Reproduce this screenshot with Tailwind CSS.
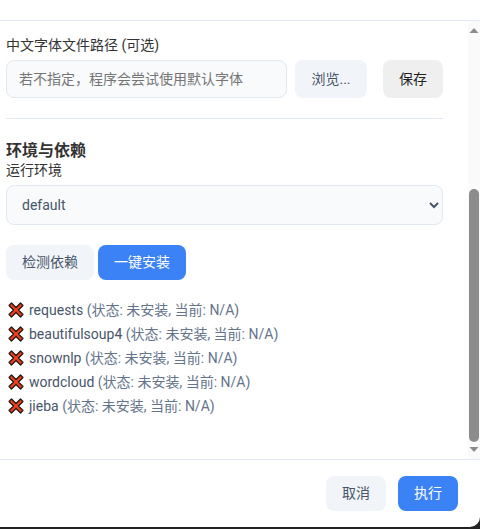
<!DOCTYPE html>
<html lang="zh-CN">
<head>
    <meta charset="UTF-8">
    <title>执行</title>
    <script src="https://cdn.jsdelivr.net/npm/@tailwindcss/browser@4"></script>
</head>
<body class="bg-[#222222] font-['Roboto','Noto_Sans_CJK_SC',sans-serif] text-[14px] text-[#333333]">
    <div class="w-[480px] h-[527px] bg-white rounded-br-[10px] flex flex-col overflow-hidden">
        <!-- Header -->
        <div class="h-[21px] shrink-0 border-b border-[#e2e8f0]"></div>

        <!-- Body -->
        <div class="h-[438px] shrink-0 flex">
            <div class="w-[468px] pl-[6px] pr-[25px]">
                <label class="block mt-[14px] h-[20px] leading-[20px]">中文字体文件路径 (可选)</label>
                <div class="flex mt-[5px]">
                    <input class="w-[281px] h-[38px] px-[12px] bg-[#f8fafc] border border-[#e2e8f0] rounded-[8px] text-[14px] placeholder:text-[#757575]" placeholder="若不指定，程序会尝试使用默认字体">
                    <button class="ml-[8px] w-[72px] h-[38px] bg-[#f1f5f9] rounded-[8px] text-[#475569]">浏览...</button>
                    <button class="ml-[16px] w-[60px] h-[38px] bg-[#efefef] rounded-[8px] text-[#222222]">保存</button>
                </div>
                <hr class="mt-[20px] border-[#e2e8f0]">

                <h3 class="mt-[21px] h-[22px] leading-[22px] text-[16px] font-bold">环境与依赖</h3>
                <label class="block h-[17px] leading-[17px]">运行环境</label>
                <select class="block mt-[6px] w-full h-[40px] pl-[11px] pr-[12px] bg-[#f8fafc] border border-[#e2e8f0] rounded-[8px] text-[14px] text-[#475569]">
                    <option>default</option>
                </select>

                <div class="flex gap-[4px] mt-[20px]">
                    <button class="w-[88px] h-[35px] bg-[#f1f5f9] rounded-[8px] text-[#475569]">检测依赖</button>
                    <button class="w-[88px] h-[35px] bg-[#3b82f6] rounded-[8px] text-white">一键安装</button>
                </div>

                <ul class="mt-[18px] text-[#475569]">
                    <li class="flex items-center h-[24px] whitespace-nowrap">
                        <svg class="w-[16px] h-[16px] mr-[5px] shrink-0 ml-[2px]" viewBox="0 0 16 16"><path d="M1 3.500l2.500-2.500 4.500 4.500 4.500-4.500 2.500 2.500-4.500 4.500 4.500 4.500-2.500 2.500-4.500-4.500-4.500 4.500-2.500-2.500 4.500-4.500z" fill="#e8401c" stroke="#1f1410" stroke-width="1.200" stroke-linejoin="round"/></svg>
                        requests&nbsp;<span class="text-[#64748b]">(状态: 未安装, 当前: N/A)</span>
                    </li>
                    <li class="flex items-center h-[24px] whitespace-nowrap">
                        <svg class="w-[16px] h-[16px] mr-[5px] shrink-0 ml-[2px]" viewBox="0 0 16 16"><path d="M1 3.500l2.500-2.500 4.500 4.500 4.500-4.500 2.500 2.500-4.500 4.500 4.500 4.500-2.500 2.500-4.500-4.500-4.500 4.500-2.500-2.500 4.500-4.500z" fill="#e8401c" stroke="#1f1410" stroke-width="1.200" stroke-linejoin="round"/></svg>
                        beautifulsoup4&nbsp;<span class="text-[#64748b]">(状态: 未安装, 当前: N/A)</span>
                    </li>
                    <li class="flex items-center h-[24px] whitespace-nowrap">
                        <svg class="w-[16px] h-[16px] mr-[5px] shrink-0 ml-[2px]" viewBox="0 0 16 16"><path d="M1 3.500l2.500-2.500 4.500 4.500 4.500-4.500 2.500 2.500-4.500 4.500 4.500 4.500-2.500 2.500-4.500-4.500-4.500 4.500-2.500-2.500 4.500-4.500z" fill="#e8401c" stroke="#1f1410" stroke-width="1.200" stroke-linejoin="round"/></svg>
                        snownlp&nbsp;<span class="text-[#64748b]">(状态: 未安装, 当前: N/A)</span>
                    </li>
                    <li class="flex items-center h-[24px] whitespace-nowrap">
                        <svg class="w-[16px] h-[16px] mr-[5px] shrink-0 ml-[2px]" viewBox="0 0 16 16"><path d="M1 3.500l2.500-2.500 4.500 4.500 4.500-4.500 2.500 2.500-4.500 4.500 4.500 4.500-2.500 2.500-4.500-4.500-4.500 4.500-2.500-2.500 4.500-4.500z" fill="#e8401c" stroke="#1f1410" stroke-width="1.200" stroke-linejoin="round"/></svg>
                        wordcloud&nbsp;<span class="text-[#64748b]">(状态: 未安装, 当前: N/A)</span>
                    </li>
                    <li class="flex items-center h-[24px] whitespace-nowrap">
                        <svg class="w-[16px] h-[16px] mr-[5px] shrink-0 ml-[2px]" viewBox="0 0 16 16"><path d="M1 3.500l2.500-2.500 4.500 4.500 4.500-4.500 2.500 2.500-4.500 4.500 4.500 4.500-2.500 2.500-4.500-4.500-4.500 4.500-2.500-2.500 4.500-4.500z" fill="#e8401c" stroke="#1f1410" stroke-width="1.200" stroke-linejoin="round"/></svg>
                        jieba&nbsp;<span class="text-[#64748b]">(状态: 未安装, 当前: N/A)</span>
                    </li>
                </ul>
            </div>

            <!-- Scrollbar -->
            <div class="w-[12px] bg-[#fafafa] flex flex-col items-center">
                <svg class="w-[10px] h-[5px] mt-[7px] shrink-0" viewBox="0 0 10 5"><path d="M5 0l4.500 5h-9z" fill="#8c8c8c"/></svg>
                <div class="w-[10px] h-[253px] mt-[156px] bg-[#8c8c8c] rounded-[5px]"></div>
                <svg class="w-[10px] h-[5px] mt-[5px] shrink-0" viewBox="0 0 10 5"><path d="M5 5l4.500-5h-9z" fill="#8c8c8c"/></svg>
            </div>
        </div>

        <!-- Footer -->
        <div class="flex-1 border-t border-[#e2e8f0] flex justify-end gap-[12px] pt-[16px] pr-[22px]">
            <button class="w-[60px] h-[35px] bg-[#f1f5f9] rounded-[8px] text-[#475569]">取消</button>
            <button class="w-[60px] h-[35px] bg-[#3b82f6] rounded-[8px] text-white">执行</button>
        </div>
    </div>
</body>
</html>
